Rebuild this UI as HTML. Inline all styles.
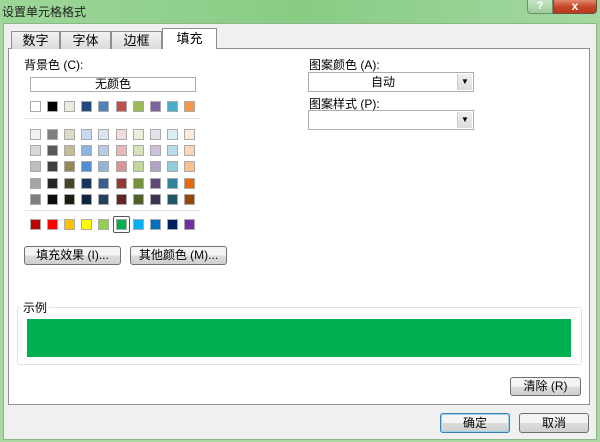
<!DOCTYPE html>
<html><head><meta charset="utf-8"><style>
*{margin:0;padding:0;box-sizing:border-box}
body{width:600px;height:442px;overflow:hidden;background:#a8d8a0;font-family:"Liberation Sans","Noto Sans CJK SC",sans-serif;font-size:12px;color:#000;position:relative}
.a{position:absolute}
.title{left:0;top:0;width:600px;height:23px;background:linear-gradient(90deg,#9ed69a,#88cc84 50%,#a4d8a0);}
.client{left:3px;top:23px;width:594px;height:417px;background:#f0f0f0;border:1px solid #8ab886}
.panel{left:8px;top:48px;width:582px;height:357px;background:#fff;border:1px solid #8e8f8f}
.tab{top:31px;height:18px;border:1px solid #8e8f8f;border-bottom:none;background:linear-gradient(#f2f2f2,#dcdcdc);text-align:center;line-height:17px;font-size:13px}
.sw{width:11px;height:11px;border:1px solid #aaa}
.btn{border:1px solid #707070;border-radius:3px;background:linear-gradient(#f4f4f4 50%,#dddddd 50%,#cfcfcf);text-align:center;font-size:12px}
.dd{border:1px solid #abadb3;background:#fff}
.arr{right:1px;top:1px;width:15px;border-left:1px solid #ccc;background:linear-gradient(#f0f0f0,#dcdcdc);font-size:8px;text-align:center}
.sep{height:1px;background:#e3e3e3}
</style></head><body>
<div class="a title"></div>
<div class="a" style="left:2px;top:3px;font-size:12px;color:#222">设置单元格格式</div>
<div class="a" style="left:527px;top:0;width:26px;height:14px;border:1px solid #6f8f6f;border-top:none;border-radius:0 0 0 4px;background:linear-gradient(#c6e4c2,#9fcb9a);color:#fff;font-weight:bold;text-align:center;line-height:13px;font-size:11px">?</div>
<div class="a" style="left:553px;top:0;width:44px;height:14px;border:1px solid #6f4f3f;border-top:none;border-radius:0 0 4px 0;background:linear-gradient(#e08a70,#c6482a 50%,#b83a1c);color:#fff;font-weight:bold;text-align:center;line-height:13px;font-size:12px">x</div>
<div class="a client"></div>
<div class="a panel"></div>
<div class="a tab" style="left:11px;width:49px">数字</div>
<div class="a tab" style="left:60px;width:51px">字体</div>
<div class="a tab" style="left:111px;width:51px">边框</div>
<div class="a tab" style="left:162px;top:28px;height:21px;width:55px;background:#fff;line-height:20px">填充</div>
<div class="a" style="left:24px;top:56px">背景色 (C):</div>
<div class="a dd" style="left:30px;top:77px;width:166px;height:15px;text-align:center;line-height:13px">无颜色</div>
<div id="sw"></div>
<div class="a sep" style="left:25px;top:118px;width:175px"></div>
<div class="a sep" style="left:25px;top:210px;width:175px"></div>
<div class="a btn" style="left:24px;top:246px;width:97px;height:19px;line-height:17px">填充效果 (I)...</div>
<div class="a btn" style="left:130px;top:246px;width:97px;height:19px;line-height:17px">其他颜色 (M)...</div>
<div class="a" style="left:309px;top:56px">图案颜色 (A):</div>
<div class="a dd" style="left:308px;top:72px;width:166px;height:20px;text-align:center;line-height:18px;padding-right:16px">自动<div class="a arr" style="height:16px;line-height:16px">▼</div></div>
<div class="a" style="left:309px;top:95px">图案样式 (P):</div>
<div class="a dd" style="left:308px;top:110px;width:166px;height:20px"><div class="a arr" style="height:16px;line-height:16px">▼</div></div>
<div class="a" style="left:17px;top:307px;width:565px;height:58px;border:1px solid #dde3e8;border-radius:3px"></div>
<div class="a" style="left:21px;top:299px;background:#fff;padding:0 2px">示例</div>
<div class="a" style="left:27px;top:319px;width:544px;height:38px;background:#00b050"></div>
<div class="a btn" style="left:510px;top:377px;width:71px;height:19px;line-height:17px">清除 (R)</div>
<div class="a btn" style="left:440px;top:413px;width:70px;height:20px;line-height:18px;border-color:#3c7fb1;box-shadow:inset 0 0 0 1px #9ad4f0">确定</div>
<div class="a btn" style="left:519px;top:413px;width:70px;height:20px;line-height:18px">取消</div>
<script>
var rows=[
[101,["#ffffff","#000000","#eeece1","#1f497d","#4f81bd","#c0504d","#9bbb59","#8064a2","#4bacc6","#f79646"]],
[129,["#f2f2f2","#7f7f7f","#ddd9c3","#c6d9f0","#dbe5f1","#f2dcdb","#ebf1dd","#e5e0ec","#dbeef3","#fdeada"]],
[145,["#d8d8d8","#595959","#c4bd97","#8db3e2","#b8cce4","#e5b9b7","#d7e3bc","#ccc1d9","#b7dde8","#fbd5b5"]],
[161,["#bfbfbf","#3f3f3f","#938953","#548dd4","#95b3d7","#d99694","#c3d69b","#b2a2c7","#92cddc","#fac08f"]],
[178,["#a5a5a5","#262626","#494429","#17365d","#366092","#953734","#76923c","#5f497a","#31859b","#e36c09"]],
[194,["#7f7f7f","#0c0c0c","#1d1b10","#0f243e","#244061","#632423","#4f6128","#3f3151","#205867","#974806"]],
[219,["#c00000","#ff0000","#ffc000","#ffff00","#92d050","#00b050","#00b0f0","#0070c0","#002060","#7030a0"]]];
var h="";rows.forEach(function(r){r[1].forEach(function(c,i){h+='<div class="a sw" style="left:'+(30+i*17.1)+'px;top:'+r[0]+'px;background:'+c+'"></div>';});});
h+='<div class="a" style="left:113px;top:216px;width:17px;height:17px;border:1px solid #555;border-radius:2px"></div>';
document.getElementById("sw").innerHTML=h;
</script>
</body></html>
